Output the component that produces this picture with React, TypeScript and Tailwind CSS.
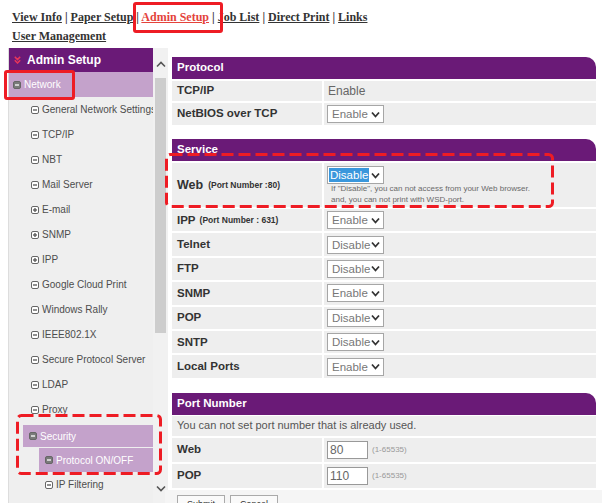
import React from 'react';

type IconKind = 'minus' | 'plus' | 'open';

function TreeIcon({ kind }: { kind: IconKind }) {
  if (kind === 'open') {
    return (
      <svg width="8" height="8" viewBox="0 0 8 8" className="shrink-0">
        <rect x="0.5" y="0.5" width="7" height="7" rx="1.5" fill="#7a7a7a" stroke="#666" />
        <line x1="2" y1="4" x2="6" y2="4" stroke="#fff" strokeWidth="1.3" />
      </svg>
    );
  }
  return (
    <svg width="8" height="8" viewBox="0 0 8 8" className="shrink-0">
      <rect x="0.5" y="0.5" width="7" height="7" rx="1.5" fill="#fff" stroke="#666" />
      <line x1="2" y1="4" x2="6" y2="4" stroke="#555" strokeWidth="1.3" />
      {kind === 'plus' && <line x1="4" y1="2" x2="4" y2="6" stroke="#555" strokeWidth="1.3" />}
    </svg>
  );
}

function Chevron({ up }: { up?: boolean }) {
  return (
    <svg width="10" height="7" viewBox="0 0 10 7">
      <path d={up ? 'M1 5.5 L5 1.5 L9 5.5' : 'M1 1.5 L5 5.5 L9 1.5'} stroke="#555" strokeWidth="1.6" fill="none" />
    </svg>
  );
}

function Select({ value, active }: { value: string; active?: boolean }) {
  return (
    <div className="ml-[3px] flex h-[18px] w-[57px] shrink-0 items-center border border-[#a6a6a6] bg-white text-[11.5px]">
      {active ? (
        <span className="ml-[1px] h-[14px] bg-[#3a97dc] pl-[1px] pr-[1px] leading-[14px] text-white">{value}</span>
      ) : (
        <span className="pl-[4px] leading-[16px] text-[#777]">{value}</span>
      )}
      <svg className="ml-auto mr-[3px]" width="9" height="7" viewBox="0 0 9 7">
        <path d="M1 1.5 L4.5 5.5 L8 1.5" stroke="#333" strokeWidth="1.8" fill="none" />
      </svg>
    </div>
  );
}

function Header({ title, mt }: { title: string; mt: string }) {
  return (
    <div className={`${mt} flex h-[22px] items-center rounded-tr-[10px] bg-[#6a1a77] pl-[5px] text-[11.5px] font-bold text-white`}>
      {title}
    </div>
  );
}

function Row({ label, sub, h, children }: { label: string; sub?: string; h: string; children: React.ReactNode }) {
  return (
    <div className={`mt-[2px] flex gap-[2px] ${h}`}>
      <div className="flex w-[150px] shrink-0 items-center bg-[#eeeeee] pl-[5px] text-[11.5px] font-bold text-[#333]">
        {label}
        {sub && <span className="ml-[4px] text-[8.5px]">{sub}</span>}
      </div>
      <div className="flex flex-1 items-center bg-[#eeeeee]">{children}</div>
    </div>
  );
}

const treeItems: [string, IconKind][] = [
  ['General Network Settings', 'minus'],
  ['TCP/IP', 'minus'],
  ['NBT', 'minus'],
  ['Mail Server', 'minus'],
  ['E-mail', 'plus'],
  ['SNMP', 'plus'],
  ['IPP', 'plus'],
  ['Google Cloud Print', 'minus'],
  ['Windows Rally', 'minus'],
  ['IEEE802.1X', 'minus'],
  ['Secure Protocol Server', 'minus'],
  ['LDAP', 'minus'],
  ['Proxy', 'minus'],
];

const services: [string, string, string?][] = [
  ['IPP', 'Enable', '(Port Number : 631)'],
  ['Telnet', 'Disable'],
  ['FTP', 'Disable'],
  ['SNMP', 'Enable'],
  ['POP', 'Disable'],
  ['SNTP', 'Disable'],
  ['Local Ports', 'Enable'],
];

export default function App() {
  return (
    <div className="relative h-[503px] w-[608px] overflow-hidden bg-white font-['Liberation_Sans',Arial,sans-serif]">
      {/* top nav */}
      <div className="pl-[12px] pt-[8px] font-['Liberation_Serif','Times_New_Roman',serif] text-[12px] font-bold leading-[19px] text-[#333]">
        <div>
          <span className="underline">View Info</span> | <span className="underline">Paper Setup</span> |{' '}
          <span className="text-[#e4433b] underline">Admin Setup</span> | <span className="underline">Job List</span> |{' '}
          <span className="underline">Direct Print</span> | <span className="underline">Links</span>
        </div>
        <div className="underline">User Management</div>
      </div>

      <div className="mt-[2px] flex items-start">
        {/* sidebar */}
        <div className="ml-[8px] flex h-[455px] w-[160px]">
          <div className="w-[145px] border-l border-[#dddddd] bg-[#efefef]">
            <div className="flex h-[24px] items-center gap-[6px] bg-[#6a1a77] pl-[5px] text-[12px] font-bold text-white">
              <svg width="7" height="8" viewBox="0 0 7 8">
                <path d="M0.8 0.8 L3.5 3.6 L6.2 0.8 M0.8 4.2 L3.5 7 L6.2 4.2" stroke="#e8365a" strokeWidth="1.5" fill="none" />
              </svg>
              Admin Setup
            </div>
            <div className="flex h-[25px] items-center gap-[3px] bg-[#c4a2cb] pl-[4px] text-[10px] text-white">
              <TreeIcon kind="open" />
              Network
            </div>
            {treeItems.map(([name, kind]) => (
              <div key={name} className="flex h-[25px] items-center gap-[3px] whitespace-nowrap pl-[22px] text-[10px] text-[#4d4d4d]">
                <TreeIcon kind={kind} />
                {name}
              </div>
            ))}
            <div className="ml-[14px] mt-[3px] flex h-[22px] items-center gap-[3px] bg-[#c4a2cb] pl-[6px] text-[10px] text-white">
              <TreeIcon kind="open" />
              Security
            </div>
            <div className="ml-[30px] mt-[1px] flex h-[24px] items-center gap-[3px] bg-[#c4a2cb] pl-[6px] text-[10px] text-white">
              <TreeIcon kind="open" />
              Protocol ON/OFF
            </div>
            <div className="flex h-[25px] items-center gap-[3px] pl-[36px] text-[10px] text-[#4d4d4d]">
              <TreeIcon kind="minus" />
              IP Filtering
            </div>
          </div>
          <div className="flex w-[15px] flex-col items-center bg-[#f1f1f1] pt-[11px]">
            <div className="flex h-[10px] items-center">
              <Chevron up />
            </div>
            <div className="mt-[9px] h-[255px] w-[11px] bg-[#cdcdcd]" />
            <div className="flex-1" />
            <div className="mb-[10px] flex h-[10px] items-center">
              <Chevron />
            </div>
          </div>
        </div>

        {/* main */}
        <div className="ml-[4px] mt-[9px] w-[424px]">
          <Header title="Protocol" mt="mt-0" />
          <Row label="TCP/IP" h="h-[20px]">
            <span className="pl-[4px] text-[12px] text-[#666]">Enable</span>
          </Row>
          <Row label="NetBIOS over TCP" h="h-[22px]">
            <Select value="Enable" />
          </Row>

          <Header title="Service" mt="mt-[14px]" />
          <div className="mt-[2px] flex h-[44px] gap-[2px]">
            <div className="flex w-[150px] shrink-0 items-center bg-[#eeeeee] pl-[5px] text-[12.5px] font-bold text-[#333]">
              Web<span className="ml-[5px] text-[8.5px]">(Port Number :80)</span>
            </div>
            <div className="flex-1 bg-[#eeeeee] pt-[3px]">
              <Select value="Disable" active />
              <div className="pl-[7px] text-[8px] leading-[10.5px] text-[#6a6a6a]">
                If "Disable", you can not access from your Web browser.
                <br />
                and, you can not print with WSD-port.
              </div>
            </div>
          </div>
          {services.map(([name, val, sub]) => (
            <Row key={name} label={name} sub={sub} h="h-[22.4px]">
              <Select value={val} />
            </Row>
          ))}

          <Header title="Port Number" mt="mt-[15px]" />
          <div className="mt-[1px] flex h-[20px] items-center bg-[#eeeeee] pl-[5px] text-[11px] text-[#555]">
            You can not set port number that is already used.
          </div>
          {[
            ['Web', '80'],
            ['POP', '110'],
          ].map(([name, val]) => (
            <Row key={name} label={name} h="h-[24px]">
              <div className="ml-[3px] flex h-[18px] w-[41px] items-center border border-[#999] bg-white pl-[2px] text-[12px] text-[#666]">
                {val}
              </div>
              <span className="ml-[4px] text-[8px] text-[#999]">(1-65535)</span>
            </Row>
          ))}
          <div className="-ml-[7px] mt-[2px] flex h-[20px] w-[437px] gap-[5px] bg-[#f5f5f5] pl-[12px] pt-[5px]">
            <div className="h-[20px] w-[48px] border border-[#aaa] bg-[#fafafa] text-center text-[9px] leading-[16px] text-[#333]">Submit</div>
            <div className="h-[20px] w-[48px] border border-[#aaa] bg-[#fafafa] text-center text-[9px] leading-[16px] text-[#333]">Cancel</div>
          </div>
        </div>
      </div>

      {/* red annotation marks */}
      <div className="absolute left-[133px] top-[2px] h-[31px] w-[90px] rounded-[3px] border-[3px] border-[#ee1c24]" />
      <div className="absolute left-[4px] top-[70px] h-[30px] w-[71px] rounded-[3px] border-[3px] border-[#ee1c24]" />
      <svg className="absolute left-[165px] top-[153px]" width="389" height="55" viewBox="0 0 389 55">
        <rect x="1.5" y="1.5" width="386" height="52" rx="4" fill="none" stroke="#ee1c24" strokeWidth="3" strokeDasharray="12 5" />
      </svg>
      <svg className="absolute left-[16px] top-[414px]" width="146" height="61" viewBox="0 0 146 61">
        <rect x="1.5" y="1.5" width="143" height="58" rx="4" fill="none" stroke="#ee1c24" strokeWidth="3" strokeDasharray="12 5" />
      </svg>
    </div>
  );
}
